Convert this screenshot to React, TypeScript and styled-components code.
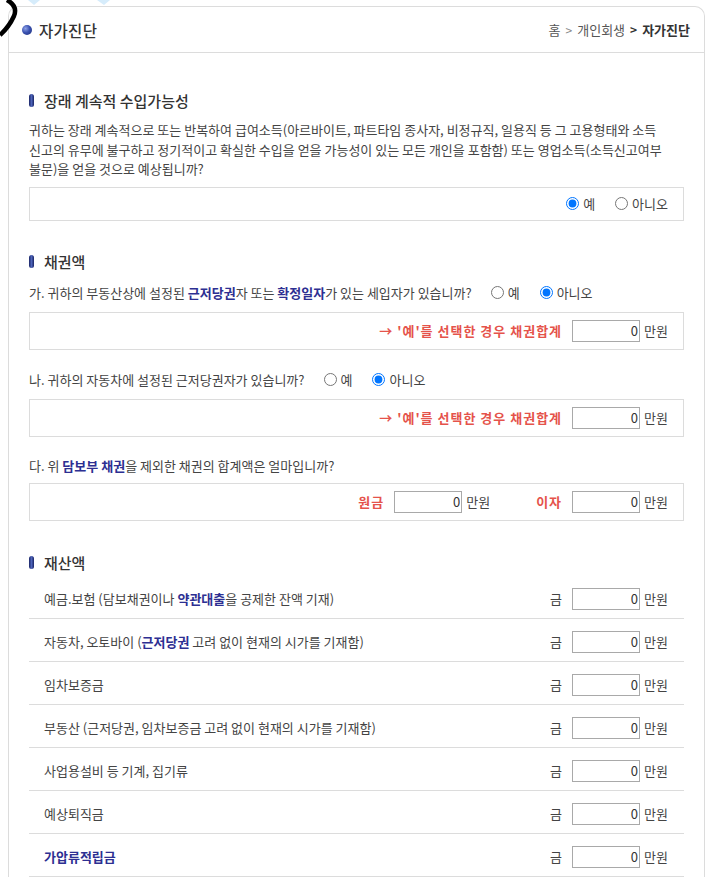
import React from "react";
import styled, { createGlobalStyle } from "styled-components";

const GlobalStyle = createGlobalStyle`
  html, body { margin: 0; padding: 0; background: #fff; }
  body {
    font-family: "Noto Sans CJK KR", "Noto Sans", sans-serif;
    font-size: 13px;
    color: #444;
  }
  * { box-sizing: border-box; }
`;

const Page = styled.div`
  position: relative;
  padding: 6px 8px 0 8px;
`;

const Decoration = styled.svg`
  position: absolute;
  left: 0;
  top: 0;
  pointer-events: none;
`;

const Panel = styled.div`
  border: 1px solid #dcdcdc;
  border-bottom: none;
  border-radius: 10px 10px 0 0;
  background: #fff;
`;

const Header = styled.div`
  display: flex;
  align-items: center;
  justify-content: space-between;
  height: 46px;
  padding: 0 14px 0 13px;
  border-bottom: 1px solid #dcdcdc;
`;

const HeaderTitle = styled.h1`
  display: flex;
  align-items: center;
  gap: 7px;
  margin: 0;
  font-size: 15.5px;
  font-weight: 500;
  color: #333;
  letter-spacing: 0.3px;
`;

const Dot = styled.span`
  width: 10px;
  height: 10px;
  border-radius: 50%;
  background: radial-gradient(circle at 35% 35%, #8fa3e8 0%, #3a52b0 45%, #1d2d78 100%);
`;

const Breadcrumb = styled.nav`
  display: flex;
  align-items: center;
  gap: 5px;
  font-size: 13px;
  color: #555;
`;

const Sep = styled.span<{ $strong?: boolean }>`
  color: ${(p) => (p.$strong ? "#333" : "#888")};
  font-weight: ${(p) => (p.$strong ? 700 : 400)};
  font-size: 12px;
`;

const Current = styled.span`
  font-weight: 700;
  color: #333;
`;

const Body = styled.div`
  padding: 37px 20px 0 20px;
`;

const Section = styled.section<{ $mt?: number }>`
  margin-top: ${(p) => p.$mt ?? 0}px;
`;

const SectionTitle = styled.h2`
  display: flex;
  align-items: center;
  gap: 10px;
  margin: 0;
  height: 20px;
  font-size: 15px;
  font-weight: 500;
  color: #333;
`;

const Pill = styled.span`
  width: 5px;
  height: 13px;
  border-radius: 3px;
  background: linear-gradient(90deg, #1a2566 0%, #4d63b8 50%, #1a2566 100%);
`;

const Paragraph = styled.p`
  margin: 10px 0 0 0;
  line-height: 19.5px;
  color: #444;
`;

const Box = styled.div<{ $h: number; $mt: number }>`
  display: flex;
  align-items: center;
  justify-content: flex-end;
  height: ${(p) => p.$h}px;
  margin-top: ${(p) => p.$mt}px;
  padding-right: 15px;
  border: 1px solid #dcdcdc;
  gap: 4px;
`;

const Question = styled.div<{ $mt: number }>`
  display: flex;
  align-items: center;
  height: 20px;
  margin-top: ${(p) => p.$mt}px;
  color: #444;
  white-space: nowrap;
`;

const Em = styled.b`
  color: #2d2f92;
  font-weight: 700;
`;

const RadioGroup = styled.div<{ $ml?: number }>`
  display: flex;
  align-items: center;
  gap: 20px;
  margin-left: ${(p) => p.$ml ?? 0}px;
`;

const RadioLabel = styled.label`
  display: flex;
  align-items: center;
  gap: 4px;
  color: #444;
`;

const Radio = styled.input`
  width: 13px;
  height: 13px;
  margin: 0;
`;

const RedLabel = styled.span<{ $mr?: number }>`
  color: #e5534b;
  font-weight: 700;
  letter-spacing: 1px;
  margin-right: ${(p) => p.$mr ?? 6}px;
`;

const AmountInput = styled.input`
  width: 68px;
  height: 22px;
  border: 1px solid #a9a9a9;
  padding: 0 1px;
  text-align: right;
  font-family: inherit;
  font-size: 13px;
  color: #333;
  background: #fff;
`;

const Unit = styled.span<{ $mr?: number }>`
  color: #444;
  margin-right: ${(p) => p.$mr ?? 0}px;
`;

const AssetList = styled.div`
  margin-top: 3px;
`;

const AssetRow = styled.div`
  display: flex;
  align-items: center;
  justify-content: space-between;
  height: 43px;
  padding: 4px 16px 0 15px;
  border-bottom: 1px solid #dcdcdc;
`;

const AssetLabel = styled.span<{ $em?: boolean }>`
  color: ${(p) => (p.$em ? "#2d2f92" : "#444")};
  font-weight: ${(p) => (p.$em ? 700 : 400)};
`;

const AssetAmount = styled.div`
  display: flex;
  align-items: center;
  gap: 4px;
`;

const Geum = styled.span`
  color: #444;
  margin-right: 6px;
`;

const Money = ({ mr }: { mr?: number }) => (
  <>
    <AmountInput defaultValue="0" readOnly />
    <Unit $mr={mr}>만원</Unit>
  </>
);

const assets: { label: React.ReactNode; em?: boolean }[] = [
  {
    label: (
      <>
        예금.보험 (담보채권이나 <Em>약관대출</Em>을 공제한 잔액 기재)
      </>
    ),
  },
  {
    label: (
      <>
        자동차, 오토바이 (<Em>근저당권</Em> 고려 없이 현재의 시가를 기재함)
      </>
    ),
  },
  { label: "임차보증금" },
  { label: "부동산 (근저당권, 임차보증금 고려 없이 현재의 시가를 기재함)" },
  { label: "사업용설비 등 기계, 집기류" },
  { label: "예상퇴직금" },
  { label: "가압류적립금", em: true },
];

export default function App() {
  return (
    <>
      <GlobalStyle />
      <Page>
        <Panel>
          <Header>
            <HeaderTitle>
              <Dot />
              자가진단
            </HeaderTitle>
            <Breadcrumb>
              <span>홈</span>
              <Sep>&gt;</Sep>
              <span>개인회생</span>
              <Sep $strong>&gt;</Sep>
              <Current>자가진단</Current>
            </Breadcrumb>
          </Header>
          <Body>
            <Section>
              <SectionTitle>
                <Pill />
                장래 계속적 수입가능성
              </SectionTitle>
              <Paragraph>
                귀하는 장래 계속적으로 또는 반복하여 급여소득(아르바이트, 파트타임 종사자, 비정규직, 일용직 등 그 고용형태와 소득
                <br />
                신고의 유무에 불구하고 정기적이고 확실한 수입을 얻을 가능성이 있는 모든 개인을 포함함) 또는 영업소득(소득신고여부
                <br />
                불문)을 얻을 것으로 예상됩니까?
              </Paragraph>
              <Box $h={34} $mt={8}>
                <RadioGroup>
                  <RadioLabel>
                    <Radio type="radio" name="q1" defaultChecked />
                    예
                  </RadioLabel>
                  <RadioLabel>
                    <Radio type="radio" name="q1" />
                    아니오
                  </RadioLabel>
                </RadioGroup>
              </Box>
            </Section>

            <Section $mt={31}>
              <SectionTitle>
                <Pill />
                채권액
              </SectionTitle>
              <Question $mt={11}>
                가. 귀하의 부동산상에 설정된&nbsp;<Em>근저당권</Em>자 또는&nbsp;<Em>확정일자</Em>가 있는 세입자가 있습니까?
                <RadioGroup $ml={19}>
                  <RadioLabel>
                    <Radio type="radio" name="q2" />
                    예
                  </RadioLabel>
                  <RadioLabel>
                    <Radio type="radio" name="q2" defaultChecked />
                    아니오
                  </RadioLabel>
                </RadioGroup>
              </Question>
              <Box $h={38} $mt={9}>
                <RedLabel>→ '예'를 선택한 경우 채권합계</RedLabel>
                <Money />
              </Box>
              <Question $mt={20}>
                나. 귀하의 자동차에 설정된 근저당권자가 있습니까?
                <RadioGroup $ml={19}>
                  <RadioLabel>
                    <Radio type="radio" name="q3" />
                    예
                  </RadioLabel>
                  <RadioLabel>
                    <Radio type="radio" name="q3" defaultChecked />
                    아니오
                  </RadioLabel>
                </RadioGroup>
              </Question>
              <Box $h={38} $mt={9}>
                <RedLabel>→ '예'를 선택한 경우 채권합계</RedLabel>
                <Money />
              </Box>
              <Question $mt={19}>
                다. 위&nbsp;<Em>담보부 채권</Em>을 제외한 채권의 합계액은 얼마입니까?
              </Question>
              <Box $h={38} $mt={7}>
                <RedLabel>원금</RedLabel>
                <Money mr={42} />
                <RedLabel>이자</RedLabel>
                <Money />
              </Box>
            </Section>

            <Section $mt={32}>
              <SectionTitle>
                <Pill />
                재산액
              </SectionTitle>
              <AssetList>
                {assets.map((a, i) => (
                  <AssetRow key={i}>
                    <AssetLabel $em={a.em}>{a.label}</AssetLabel>
                    <AssetAmount>
                      <Geum>금</Geum>
                      <Money />
                    </AssetAmount>
                  </AssetRow>
                ))}
              </AssetList>
            </Section>
          </Body>
        </Panel>
        <Decoration width="130" height="40" viewBox="0 0 130 40">
          <path d="M28 0 L34 5 L40 0 Z" fill="#d6ecfb" />
          <path d="M97 0 L104 5 L110 0 Z" fill="#d6ecfb" />
          <path d="M7 0 Q18 6 14 16 Q9 27 0 35" fill="none" stroke="#000" strokeWidth="4.5" />
        </Decoration>
      </Page>
    </>
  );
}
